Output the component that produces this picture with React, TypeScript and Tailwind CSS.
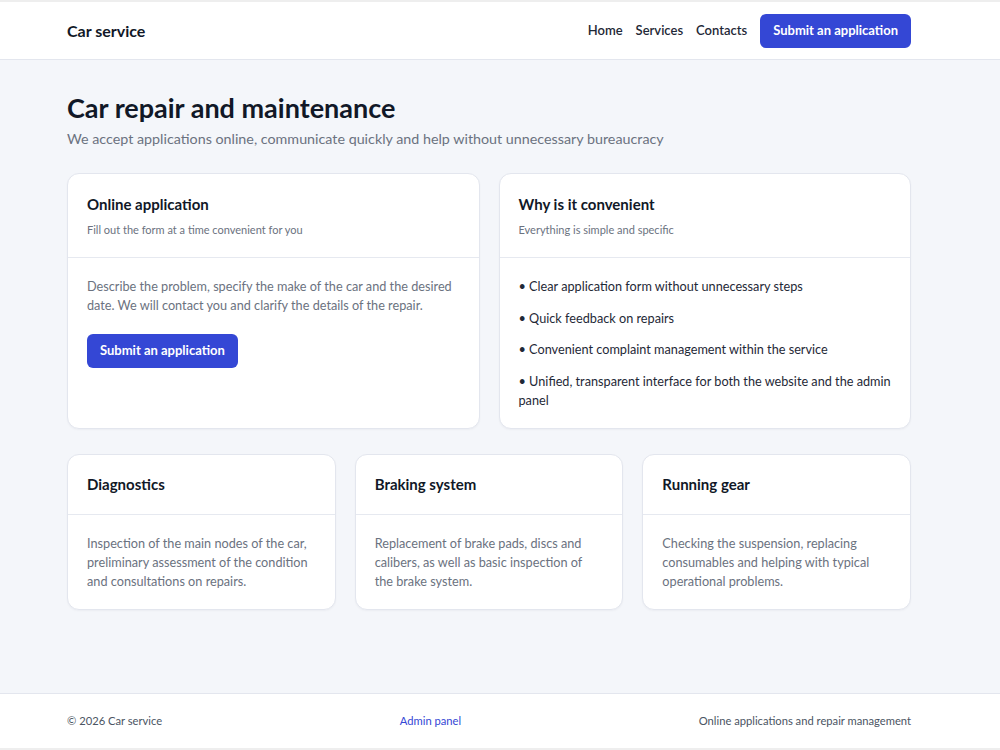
import React from "react"

const services = [
  {
    title: "Diagnostics",
    text: "Inspection of the main nodes of the car, preliminary assessment of the condition and consultations on repairs.",
  },
  {
    title: "Braking system",
    text: "Replacement of brake pads, discs and calibers, as well as basic inspection of the brake system.",
  },
  {
    title: "Running gear",
    text: "Checking the suspension, replacing consumables and helping with typical operational problems.",
  },
]

const perks = [
  "Clear application form without unnecessary steps",
  "Quick feedback on repairs",
  "Convenient complaint management within the service",
  "Unified, transparent interface for both the website and the admin panel",
]

function Card({ title, subtitle, children }: { title: string; subtitle?: string; children: React.ReactNode }) {
  return (
    <div className="bg-white border border-[#e3e6ee] rounded-xl shadow-[0_1px_2px_rgba(16,24,40,0.04)]">
      <div className={`px-[19px] border-b border-[#e6e9f0] ${subtitle ? "pt-[21px] pb-[19px]" : "pt-[20px] pb-[20px]"}`}>
        <h3 className="text-[15px] leading-[19px] font-bold text-[#111827]">{title}</h3>
        {subtitle && <p className="mt-[8px] text-[11px] leading-[16px] text-[#6b7280]">{subtitle}</p>}
      </div>
      <div className="px-[19px] pt-[19px] pb-[18px]">{children}</div>
    </div>
  )
}

export default function App() {
  return (
    <div
      className="h-screen flex flex-col bg-[#f4f6fa] border-t-2 border-[#eeeeee]"
      style={{ fontFamily: 'Lato, "Noto Sans", sans-serif' }}
    >
      <header className="bg-white border-b border-[#e3e6ee]">
        <div className="w-[844px] ml-[67px] h-[57px] flex items-center justify-between">
          <span className="text-[16px] font-bold text-[#111827]">Car service</span>
          <nav className="flex items-center gap-[13px] text-[13px] font-semibold text-[#1f2937]">
            <a>Home</a>
            <a>Services</a>
            <a>Contacts</a>
            <button className="h-[34px] px-[13px] rounded-md bg-[#3447d5] text-white font-bold text-[13px]">
              Submit an application
            </button>
          </nav>
        </div>
      </header>

      <main className="flex-1 overflow-hidden">
        <div className="w-[844px] ml-[67px] pt-[31px]">
          <h1 className="text-[27px] leading-[34px] font-bold text-[#111827]">Car repair and maintenance</h1>
          <p className="mt-[3px] text-[14.3px] leading-[22px] text-[#6b7280]">
            We accept applications online, communicate quickly and help without unnecessary bureaucracy
          </p>

          <div className="mt-[23px] grid grid-cols-2 gap-[19px]">
            <Card title="Online application" subtitle="Fill out the form at a time convenient for you">
              <p className="text-[12.7px] leading-[19px] text-[#6b7280]">
                Describe the problem, specify the make of the car and the desired date. We will contact you and clarify
                the details of the repair.
              </p>
              <button className="mt-[19px] h-[34px] px-[13px] rounded-md bg-[#3447d5] text-white font-bold text-[13px]">
                Submit an application
              </button>
            </Card>
            <Card title="Why is it convenient" subtitle="Everything is simple and specific">
              <ul className="flex flex-col gap-[12.5px] text-[12.7px] leading-[19px] text-[#1f2937]">
                {perks.map((p) => (
                  <li key={p}>• {p}</li>
                ))}
              </ul>
            </Card>
          </div>

          <div className="mt-[25px] grid grid-cols-3 gap-[19px]">
            {services.map((s) => (
              <Card key={s.title} title={s.title}>
                <p className="text-[12.7px] leading-[19px] text-[#6b7280]">{s.text}</p>
              </Card>
            ))}
          </div>
        </div>
      </main>

      <footer className="bg-white border-t border-[#e3e6ee] border-b-2 border-b-[#eeeeee]">
        <div className="w-[844px] ml-[67px] h-[54px] flex items-center justify-between text-[11.2px] text-[#4b5563]">
          <span>© 2026 Car service</span>
          <a className="text-[#3447d5]">Admin panel</a>
          <span>Online applications and repair management</span>
        </div>
      </footer>
    </div>
  )
}
